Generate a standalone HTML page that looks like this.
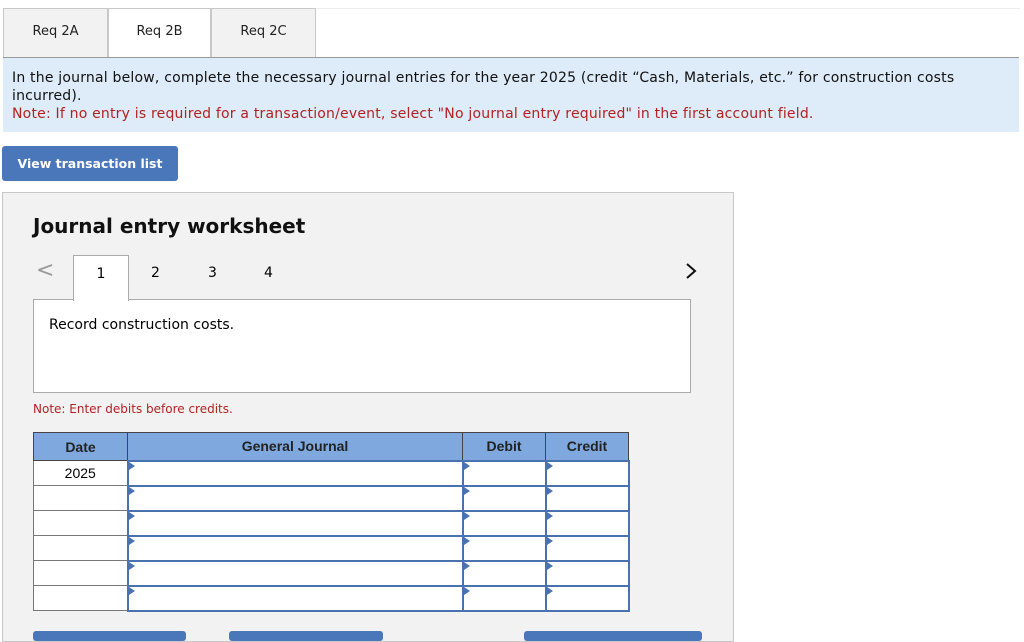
<!DOCTYPE html>
<html><head><style>
*{box-sizing:border-box;margin:0;padding:0}
body{width:1024px;height:634px;background:#fff;position:relative;overflow:hidden;font-family:"DejaVu Sans","Liberation Sans",sans-serif;}
.a{position:absolute}
.tab{position:absolute;top:8px;height:49px;border:1px solid #c8c8c8;border-bottom:none;font-size:13px;text-align:center;line-height:46px;color:#222}
.blue{left:3px;top:57px;width:1016px;height:75px;background:#deebf8;border-top:1px solid #999;font-size:14px;line-height:18px;padding:11px 9px;color:#111;letter-spacing:0.2px}
.red{color:#b22222}
.btn{left:2px;top:146px;width:176px;height:35px;background:#4a77ba;border-radius:3px;color:#fff;font-weight:bold;font-size:12.5px;line-height:35px;text-align:center}
.panel{left:2px;top:192px;width:732px;height:450px;background:#f2f2f2;border:1px solid #c8c8c8}
table{position:absolute;left:33px;top:432px;border-collapse:collapse;font-family:"Liberation Sans",sans-serif;font-size:14px}
th{background:#7fa9de;height:28px;border:1px solid #444;font-weight:bold;color:#222}
td{height:25px;background:#fff;border:1px solid #777;position:relative}
td.i{border:2px solid #4a72b0}
td.i:before{content:"";position:absolute;left:0;top:0;border-left:6px solid #4a72b0;border-top:4px solid transparent;border-bottom:4px solid transparent}
</style></head><body>
<div class="tab" style="left:3px;width:105px;background:#f2f2f2">Req 2A</div>
<div class="tab" style="left:108px;width:103px;background:#fff">Req 2B</div>
<div class="tab" style="left:211px;width:105px;background:#f2f2f2">Req 2C</div>
<div class="a" style="left:316px;top:8px;width:704px;border-top:1px solid #eee"></div>
<div class="a blue"><div style="width:995px">In the journal below, complete the necessary journal entries for the year 2025 (credit “Cash, Materials, etc.” for construction costs incurred).</div><span class="red">Note: If no entry is required for a transaction/event, select "No journal entry required" in the first account field.</span></div>
<div class="a btn">View transaction list</div>
<div class="a panel"></div>
<div class="a" style="left:33px;top:214px;font-size:20px;font-weight:bold;color:#111">Journal entry worksheet</div>
<div class="a" style="left:36px;top:258px;font-size:22px;color:#999">&lt;</div>
<div class="a" style="left:73px;top:255px;width:56px;height:46px;background:#fff;border:1px solid #aaa;border-bottom:none;font-size:14px;text-align:center;line-height:36px;z-index:2">1</div>
<div class="a" style="left:151px;top:265px;font-size:14px">2</div>
<div class="a" style="left:208px;top:265px;font-size:14px">3</div>
<div class="a" style="left:264px;top:265px;font-size:14px">4</div>
<svg class="a" style="left:684px;top:262px" width="14" height="18"><path d="M3 2 L11 9 L3 16" fill="none" stroke="#111" stroke-width="2"/></svg>
<div class="a" style="left:33px;top:299px;width:658px;height:94px;background:#fff;border:1px solid #aaa;font-size:14px;padding:17px 15px">Record construction costs.</div>
<div class="a red" style="left:33px;top:402px;font-size:12px">Note: Enter debits before credits.</div>
<table>
<tr><th style="width:94px">Date</th><th style="width:335px">General Journal</th><th style="width:83px">Debit</th><th style="width:83px">Credit</th></tr>
<tr><td style="text-align:center">2025</td><td class="i"></td><td class="i"></td><td class="i"></td></tr>
<tr><td></td><td class="i"></td><td class="i"></td><td class="i"></td></tr>
<tr><td></td><td class="i"></td><td class="i"></td><td class="i"></td></tr>
<tr><td></td><td class="i"></td><td class="i"></td><td class="i"></td></tr>
<tr><td></td><td class="i"></td><td class="i"></td><td class="i"></td></tr>
<tr><td></td><td class="i"></td><td class="i"></td><td class="i"></td></tr>
</table>
<div class="a" style="left:33px;top:631px;width:153px;height:10px;background:#4a77ba;border-radius:3px"></div>
<div class="a" style="left:229px;top:631px;width:154px;height:10px;background:#4a77ba;border-radius:3px"></div>
<div class="a" style="left:524px;top:631px;width:178px;height:10px;background:#4a77ba;border-radius:3px"></div>
</body></html>
